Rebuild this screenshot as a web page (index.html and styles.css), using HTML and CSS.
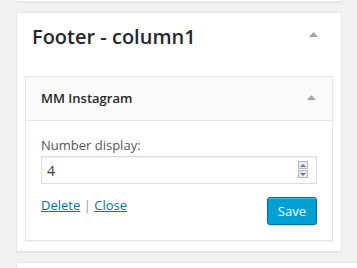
FILE: index.html
```
<!DOCTYPE html>
<html>
<head>
<meta charset="utf-8">
<link rel="stylesheet" href="styles.css">
</head>
<body>
<div class="wrap">
  <div class="card-top"></div>
  <div class="card">
    <div class="sidebar-head">
      <h2 class="sidebar-title">Footer - column1</h2>
      <svg class="arrow arrow-outer" width="9" height="5" viewBox="0 0 9 5"><polygon points="0,5 4.5,0 9,5" fill="#a0a5aa"/></svg>
    </div>
    <div class="widget">
      <div class="widget-head">
        <h3 class="widget-title">MM Instagram</h3>
        <svg class="arrow arrow-inner" width="9" height="5" viewBox="0 0 9 5"><polygon points="0,5 4.5,0 9,5" fill="#a0a5aa"/></svg>
      </div>
      <div class="widget-body">
        <label class="field-label">Number display:</label>
        <div class="number-field">
          <input class="number-input" type="text" value="4">
          <div class="spinner">
            <span class="spin spin-up"><svg width="6" height="3" viewBox="0 0 6 3"><polygon points="0,3 3,0 6,3" fill="#5f76c8"/></svg></span>
            <span class="spin spin-down"><svg width="6" height="3" viewBox="0 0 6 3"><polygon points="0,0 3,3 6,0" fill="#5f76c8"/></svg></span>
          </div>
        </div>
        <div class="actions">
          <div class="links"><a href="#">Delete</a> <span class="sep">|</span> <a href="#">Close</a></div>
          <button class="save">Save</button>
        </div>
      </div>
    </div>
  </div>
  <div class="card-next"></div>
</div>
</body>
</html>
```
FILE: styles.css
```
html, body {
  margin: 0;
  padding: 0;
  background: #f1f1f1;
  overflow: hidden;
  font-family: "Open Sans", "Liberation Sans", sans-serif;
  color: #23282d;
}
.wrap {
  padding-left: 16px;
}
.card-top {
  width: 324px;
  height: 1px;
  background: #fff;
  border: 1px solid #e5e5e5;
  border-top: none;
  box-shadow: 0 1px 1px rgba(0,0,0,.04);
  margin-bottom: 10px;
}
.card {
  width: 326px;
  box-sizing: border-box;
  background: #fff;
  border: 1px solid #e5e5e5;
  box-shadow: 0 1px 1px rgba(0,0,0,.04);
  padding-bottom: 10px;
}
.sidebar-head {
  display: flex;
  justify-content: space-between;
  align-items: flex-start;
  padding: 11px 23px 0 15px;
}
.sidebar-title {
  margin: 0;
  font-size: 20px;
  line-height: 26px;
  font-weight: 600;
  color: #23282d;
}
.arrow {
  display: block;
  flex: none;
}
.arrow-outer {
  margin-top: 8px;
}
.widget {
  margin: 26px 8px 0 8px;
  border: 1px solid #e5e5e5;
  background: #fff;
  box-shadow: 0 1px 1px rgba(0,0,0,.04);
}
.widget-head {
  display: flex;
  justify-content: space-between;
  align-items: flex-start;
  padding: 12px 16px 13px 15px;
  background: #fafafa;
  border-bottom: 1px solid #e5e5e5;
}
.widget-title {
  margin: 0;
  font-size: 13px;
  line-height: 18px;
  font-weight: 600;
  color: #23282d;
}
.arrow-inner {
  margin-top: 6px;
}
.widget-body {
  padding: 14px 15px 15px 15px;
}
.field-label {
  display: block;
  font-size: 13px;
  line-height: 21px;
  color: #555;
}
.number-field {
  position: relative;
}
.number-input {
  display: block;
  width: 100%;
  height: 28px;
  box-sizing: border-box;
  margin: 0;
  padding: 0 5px;
  border: 1px solid #ddd;
  box-shadow: inset 0 1px 2px rgba(0,0,0,.07);
  font-family: "Open Sans", "Liberation Sans", sans-serif;
  font-size: 14px;
  line-height: 26px;
  color: #32373c;
  background: #fff;
  outline: none;
}
.spinner {
  position: absolute;
  top: 5px;
  right: 9px;
  width: 10px;
  display: flex;
  flex-direction: column;
  gap: 1px;
}
.spin {
  display: flex;
  align-items: center;
  justify-content: center;
  height: 6px;
  border: 1px solid #b5b5b5;
  background: #ececec;
}
.spin svg {
  display: block;
}
.actions {
  display: flex;
  justify-content: space-between;
  align-items: flex-start;
  margin-top: 13px;
}
.links {
  font-size: 13px;
  line-height: 16px;
  color: #999;
}
.links a {
  color: #0073aa;
  text-decoration: underline;
}
.sep {
  color: #999;
}
.save {
  height: 28px;
  margin: 0;
  padding: 0 10px;
  border: 1px solid #0073aa;
  border-radius: 3px;
  background: #00a0d2;
  color: #fff;
  font-family: "Open Sans", "Liberation Sans", sans-serif;
  font-size: 13px;
  line-height: 26px;
  box-shadow: inset 0 1px 0 rgba(120,200,230,.5), 0 1px 0 rgba(0,0,0,.15);
  cursor: pointer;
}
.card-next {
  margin-top: 10px;
  width: 400px;
  height: 20px;
  background: #fff;
  border: 1px solid #e5e5e5;
}
```
